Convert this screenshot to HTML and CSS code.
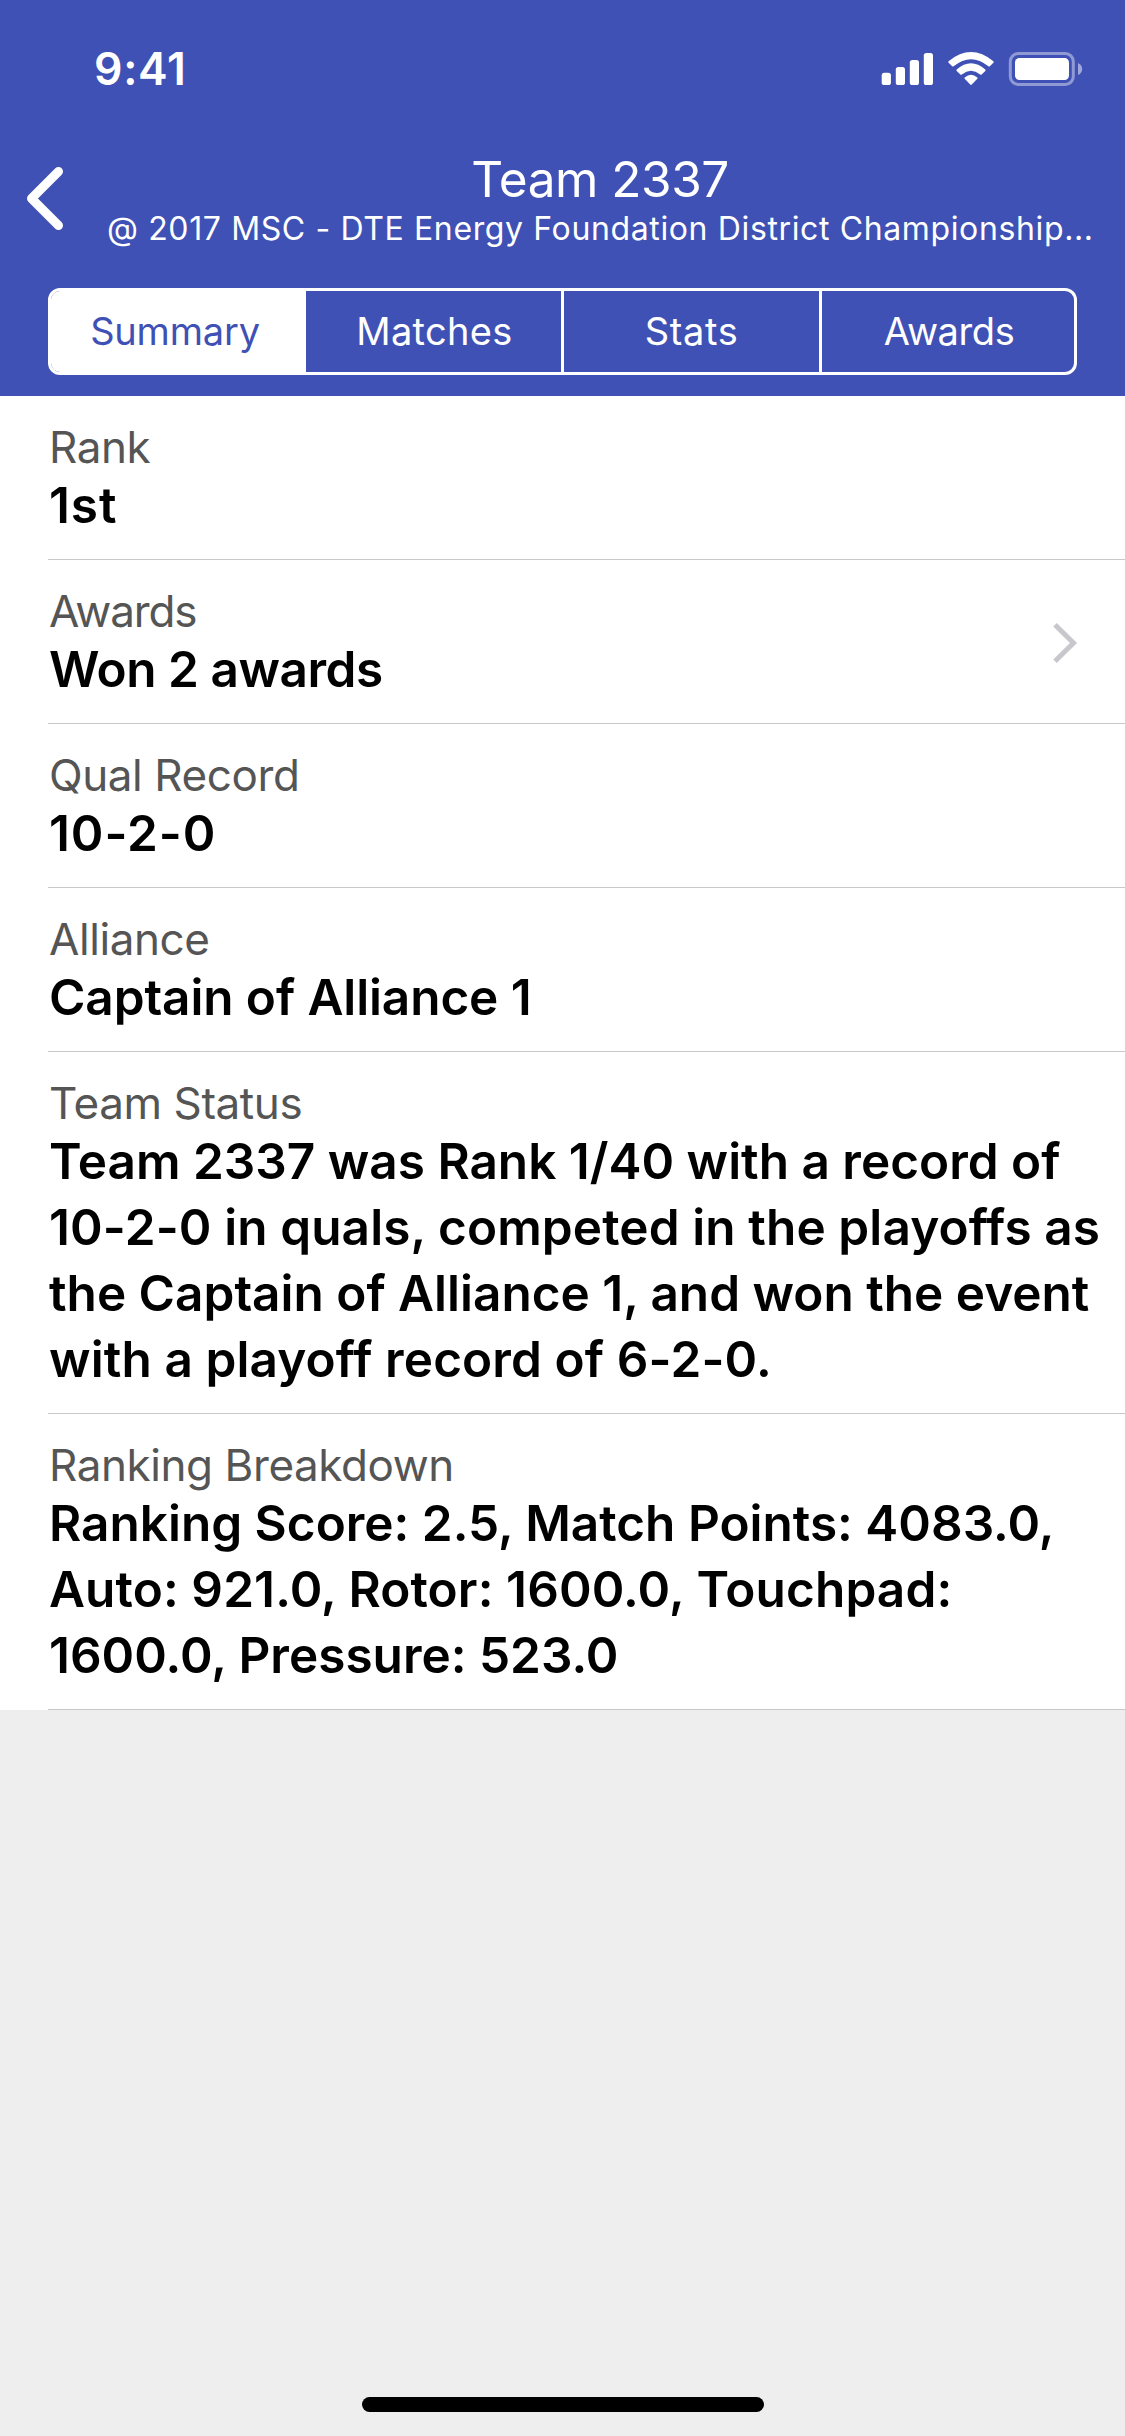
FILE: index.html
```html
<!DOCTYPE html>
<html lang="en">
<head>
<meta charset="utf-8">
<title>Team 2337</title>
<link rel="stylesheet" href="styles.css">
</head>
<body>
<header class="header">
  <div class="status-bar">
    <span class="time">9:41</span>
    <svg class="status-icons" width="202" height="36" viewBox="881 51 202 36" fill="#fff">
      <rect x="881.7" y="72.7" width="9.2" height="12.3" rx="2.6"/>
      <rect x="895.8" y="67" width="9.2" height="18" rx="2.6"/>
      <rect x="909.8" y="60" width="9.2" height="25" rx="2.6"/>
      <rect x="923.8" y="53" width="9.2" height="32" rx="2.6"/>
      <path d="M948.6 61.2 Q971 42.8 993.4 61.2 Q994 62 993.4 62.8 L989.8 66.3 Q989.1 66.8 988.4 66.3 Q971 52 953.6 66.3 Q952.9 66.8 952.2 66.3 L948.6 62.8 Q948 62 948.6 61.2Z"/>
      <path d="M956.7 69.4 Q971 57 985.3 69.4 Q985.9 70.2 985.3 70.9 L981.6 74.4 Q980.9 75 980.2 74.4 Q971 67.2 961.8 74.4 Q961.1 75 960.4 74.4 L956.7 70.9 Q956.1 70.2 956.7 69.4Z"/>
      <path d="M964.7 77.4 Q971 72 977.3 77.4 Q977.9 78.1 977.3 78.8 L971.8 84.5 Q971 85.3 970.2 84.5 L964.7 78.8 Q964.1 78.1 964.7 77.4Z"/>
      <rect x="1010.3" y="53.5" width="63" height="31" rx="8" fill="none" stroke="#fff" stroke-width="3" opacity=".42"/>
      <rect x="1015" y="58" width="54" height="22" rx="4.5"/>
      <path d="M1078 63 Q1082.2 65 1082.2 69 T1078 75Z" opacity=".5"/>
    </svg>
  </div>
  <div class="nav-bar">
    <svg class="back" width="44" height="70" viewBox="0 0 44 70" fill="none" stroke="#fff" stroke-width="9" stroke-linecap="round" stroke-linejoin="round"><path d="M35.5 8.5 8.5 35.5 35.5 62.5"/></svg>
    <div class="heading">
      <h1 class="title">Team 2337</h1>
      <div class="subtitle">@ 2017 MSC - DTE Energy Foundation District Championship...</div>
    </div>
  </div>
  <nav class="segments">
    <span class="segment selected">Summary</span>
    <span class="segment matches">Matches</span>
    <span class="segment stats">Stats</span>
    <span class="segment awards">Awards</span>
  </nav>
</header>
<main class="list">
  <section class="row"><div class="label tight">Rank</div><div class="value loose">1st</div></section>
  <section class="row link">
    <div><div class="label tighter">Awards</div><div class="value tight">Won 2 awards</div></div>
    <svg class="chevron" width="26" height="42" viewBox="0 0 26 42" fill="none" stroke="#c7c7cc" stroke-width="5"><path d="M3 2.7 21.5 21 3 39.3"/></svg>
  </section>
  <section class="row"><div class="label">Qual Record</div><div class="value loose">10-2-0</div></section>
  <section class="row"><div class="label">Alliance</div><div class="value snug">Captain of Alliance 1</div></section>
  <section class="row"><div class="label">Team Status</div><div class="value">Team 2337 was Rank 1/40 with a record of<br><span class="wide">10-2-0 in quals, competed in the playoffs as</span><br>the Captain of Alliance 1, and won the event<br><span class="wide">with a playoff record of 6-2-0.</span></div></section>
  <section class="row"><div class="label">Ranking Breakdown</div><div class="value">Ranking Score: 2.5, Match Points: 4083.0,<br><span class="wide">Auto: 921.0, Rotor: 1600.0, Touchpad:</span><br>1600.0, Pressure: 523.0</div></section>
</main>
<div class="home-indicator"></div>
</body>
</html>
```
FILE: styles.css
```css
* { box-sizing: border-box; }

body {
  margin: 0;
  min-height: 2436px;
  display: flex;
  flex-direction: column;
  background: #eee;
  color: #000;
  font-family: Inter, "Liberation Sans", sans-serif;
}

svg { display: block; flex: none; }

/* Header */
.header {
  height: 396px;
  background: #3f51b5;
  color: #fff;
}

.status-bar {
  display: flex;
  justify-content: space-between;
  align-items: flex-start;
  height: 149px;
  padding: 39px 42px 0 94px;
}

.time {
  font-size: 44.5px;
  font-weight: 600;
  line-height: 60px;
  letter-spacing: 0.7px;
}

.status-icons { margin-top: 12px; }

.nav-bar {
  display: flex;
  gap: 40px;
  height: 139px;
  padding-left: 23px;
}

.back { margin-top: 14px; }

.heading {
  width: 986px;
  text-align: center;
  white-space: nowrap;
}

.title {
  margin: 0;
  font-size: 49.5px;
  font-weight: 400;
  line-height: 60px;
  letter-spacing: -0.48px;
}

.subtitle {
  font-size: 32px;
  line-height: 40px;
  letter-spacing: 0.63px;
}

.segments {
  display: grid;
  grid-template-columns: 255px 258px 258px 252px;
  width: 1029px;
  height: 87px;
  margin-left: 48px;
  border: 3px solid #fff;
  border-radius: 12px;
  overflow: hidden;
}

.segment {
  display: flex;
  align-items: center;
  justify-content: center;
  padding-bottom: 2px;
  border-right: 3px solid #fff;
  font-size: 38px;
}

.segment:last-child { border-right: 0; }

.selected {
  padding-right: 4px;
  background: #fff;
  color: #3f51b5;
  letter-spacing: -0.19px;
}

.matches { padding-left: 2px; letter-spacing: 0.32px; }
.stats { letter-spacing: 0.65px; }
.awards { padding-left: 2px; letter-spacing: -0.4px; }

/* Summary rows */
.list { background: #fff; }

.row {
  margin-left: 48px;
  padding: 26px 0 21px;
  border-bottom: 1px solid #c8c7cc;
  white-space: nowrap;
}

.link {
  display: flex;
  align-items: center;
  justify-content: space-between;
  padding-right: 47px;
}

.chevron { margin-bottom: 3px; }

.label {
  padding-left: 1px;
  color: #555;
  font-size: 44px;
  line-height: 50px;
  letter-spacing: -0.42px;
}

.value {
  padding-left: 1px;
  font-size: 49.5px;
  font-weight: 600;
  line-height: 66px;
}

.snug { letter-spacing: -0.1px; }
.tight { letter-spacing: -0.45px; }
.tighter { letter-spacing: -1.1px; }
.loose { letter-spacing: 0.9px; }
.wide { letter-spacing: 0.11px; }

.home-indicator {
  width: 402px;
  height: 15px;
  margin: auto auto 24px;
  border-radius: 8px;
  background: #000;
}
```
